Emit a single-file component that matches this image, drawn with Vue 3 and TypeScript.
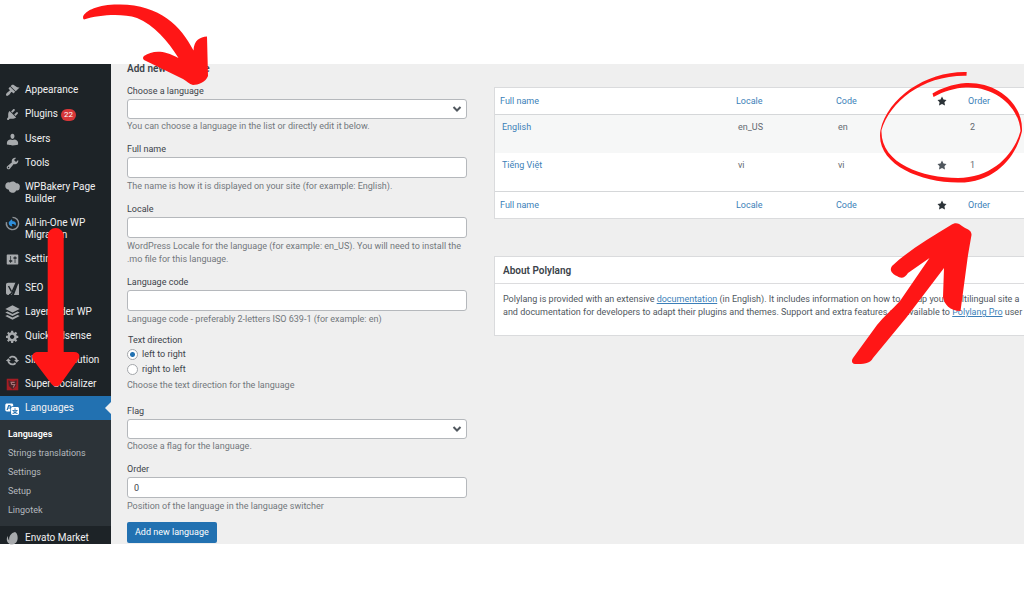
<script setup lang="ts">
import { ref } from 'vue'

interface MenuItem {
  label: string
  icon: string
  badge?: number
  spaced?: boolean
  current?: boolean
}

const paths: Record<string, string> = {
  brush: 'M14.48 11.06L7.41 3.99l1.5-1.5c.5-.56 2.3-.47 3.51.32 1.21.8 1.43 1.28 2.91 2.1 1.18.64 2.45 1.26 4.45.85zm-.71.71L6.7 4.7 4.93 6.47c-.39.39-.39 1.02 0 1.41l1.06 1.06c.39.39.39 1.03 0 1.42-.6.6-1.43 1.11-2.21 1.69-.35.26-.7.53-1.01.84C1.43 14.23.4 16.08 1.4 17.07c.99 1 2.84-.03 4.18-1.36.31-.31.58-.66.85-1.02.57-.78 1.08-1.61 1.69-2.21.39-.39 1.02-.39 1.41 0l1.06 1.06c.39.39 1.02.39 1.41 0z',
  plug: 'M13.11 4.36L9.87 7.6 8 5.73l3.24-3.24c.35-.34 1.05-.2 1.56.32.52.51.66 1.21.31 1.55zm-8 1.77l.91-1.12 9.01 9.01-1.19.84c-.71.71-2.63 1.16-3.82 1.16H6.14L4.9 17.26c-.59.59-1.54.59-2.12 0-.59-.58-.59-1.53 0-2.12l1.24-1.24v-3.88c0-1.13.4-3.19 1.09-3.89zm7.26 3.97l3.24-3.24c.34-.35 1.04-.21 1.55.31.52.51.66 1.21.31 1.55l-3.24 3.25z',
  user: 'M10 9.25c-2.27 0-2.73-3.44-2.73-3.44C7 4.02 7.82 2 9.97 2c2.16 0 2.98 2.02 2.71 3.81 0 0-.41 3.44-2.68 3.44zm0 1.57L12.72 10c2.39 0 5.02 2.33 5.02 4.53v2.49s-3.65 1.13-7.74 1.13c-3.65 0-7.74-1.13-7.74-1.13v-2.49c0-2.25 2.44-4.48 4.97-4.48z',
  wrench: 'M16.68 9.77c-1.34 1.34-3.3 1.67-4.95.99l-5.41 6.52c-.99.99-2.59.99-3.58 0s-.99-2.59 0-3.57l6.52-5.42c-.68-1.65-.35-3.61.99-4.95 1.28-1.28 3.12-1.62 4.72-1.06l-2.89 2.89 2.82 2.82 2.86-2.87c.53 1.58.18 3.39-1.08 4.65zM3.81 16.21c.4.39 1.04.39 1.43 0 .4-.4.4-1.04 0-1.43-.39-.4-1.03-.4-1.43 0-.39.39-.39 1.03 0 1.43z',
  cloud: 'M0 8C0 4 3 2 6 3c3-2 7-2 9 1 4 0 6 3 5 6 0 3-2 5-5 4-1 3-4 4-7 3-2-1-3-2-3-4C2 13 0 11 0 8z',
  sliders: 'M18 16V4c0-.55-.45-1-1-1H3c-.55 0-1 .45-1 1v12c0 .55.45 1 1 1h14c.55 0 1-.45 1-1zM8 11h1c.55 0 1 .45 1 1s-.45 1-1 1H8v1.5c0 .28-.22.5-.5.5s-.5-.22-.5-.5V13H6c-.55 0-1-.45-1-1s.45-1 1-1h1V5.5c0-.28.22-.5.5-.5s.5.22.5.5V11zm5-2h-1c-.55 0-1-.45-1-1s.45-1 1-1h1V5.5c0-.28.22-.5.5-.5s.5.22.5.5V7h1c.55 0 1 .45 1 1s-.45 1-1 1h-1v5.5c0 .28-.22.5-.5.5s-.5-.22-.5-.5V9z',
  layers: 'M10 0l10 5-10 5L0 5zM3 8.5l7 3.5 7-3.5 3 1.5-10 5-10-5zM3 13.500l7 3.500 7-3.500 3 1.500-10 5-10-5z',
  gear: 'M18 12h-2.18c-.17.7-.44 1.35-.81 1.93l1.54 1.54-2.1 2.1-1.54-1.54c-.58.36-1.23.63-1.91.79V19H8v-2.18c-.68-.16-1.33-.43-1.91-.79l-1.54 1.54-2.12-2.12 1.54-1.54c-.36-.58-.63-1.23-.79-1.91H1V9.03h2.17c.16-.7.44-1.35.8-1.94L2.43 5.55l2.1-2.1 1.54 1.54c.58-.37 1.24-.64 1.93-.81V2h3v2.18c.68.16 1.33.43 1.91.79l1.54-1.54 2.12 2.12-1.54 1.54c.36.59.64 1.24.8 1.94H18V12zm-8.5 1.5c1.66 0 3-1.34 3-3s-1.34-3-3-3-3 1.34-3 3 1.34 3 3 3z',
  cycle: 'M10.2 3.28c3.53 0 6.43 2.61 6.92 6h2.08l-3.5 4-3.5-4h2.32c-.45-1.97-2.21-3.45-4.32-3.45-1.45 0-2.73.71-3.54 1.78L4.95 5.66C6.23 4.2 8.11 3.28 10.2 3.28zm-.4 13.44c-3.52 0-6.43-2.61-6.92-6H.8l3.5-4c1.17 1.33 2.33 2.67 3.5 4H5.48c.45 1.97 2.21 3.45 4.32 3.45 1.45 0 2.73-.71 3.54-1.78l1.71 1.95c-1.28 1.46-3.15 2.38-5.25 2.38z',
  translate: 'M11 7H9.49c-.63 0-1.25.3-1.59.7L7 5H4.13l-2.39 7h1.69l.74-2H7v4H2c-1.1 0-2-.9-2-2V5c0-1.1.9-2 2-2h7c1.1 0 2 .9 2 2v2zM6.51 9H4.49l1-2.93zM10 8h7c1.1 0 2 .9 2 2v7c0 1.1-.9 2-2 2h-7c-1.1 0-2-.9-2-2v-7c0-1.1.9-2 2-2zm7.25 5v-1.08h-3.17V9.75h-1.16v2.17H9.75V13h1.28c.11.85.56 1.85 1.28 2.62-.87.36-1.89.62-2.31.62-.01.02.22.97.2 1.46.84 0 2.21-.5 3.28-1.15 1.09.65 2.48 1.15 3.34 1.15-.02-.49.2-1.44.2-1.46-.43 0-1.49-.27-2.38-.63.7-.77 1.14-1.77 1.25-2.61h1.36zm-3.81 1.93c-.5-.46-.85-1.13-1.01-1.93h2.09c-.17.8-.51 1.47-1 1.93l-.04.03s-.03-.02-.04-.03z',
  leaf: 'M14 0c4 2 5 10 3 14-2 5-8 7-12 4C1 15 0 10 3 6c0 3 0 5 2 7C4 7 8 1 14 0z',
}

const menu: MenuItem[] = [
  { label: 'Appearance', icon: 'brush' },
  { label: 'Plugins', icon: 'plug', badge: 22 },
  { label: 'Users', icon: 'user' },
  { label: 'Tools', icon: 'wrench' },
  { label: 'WPBakery Page Builder', icon: 'cloud' },
  { label: 'All-in-One WP Migration', icon: 'migrate' },
  { label: 'Settings', icon: 'sliders' },
  { label: 'SEO', icon: 'seo', spaced: true },
  { label: 'LayerSlider WP', icon: 'layers' },
  { label: 'Quick Adsense', icon: 'gear' },
  { label: 'Slider Revolution', icon: 'cycle' },
  { label: 'Super Socializer', icon: 'shield' },
  { label: 'Languages', icon: 'translate', current: true },
]
const submenu = ['Languages', 'Strings translations', 'Settings', 'Setup', 'Lingotek']

const languages = [
  { name: 'English', locale: 'en_US', code: 'en', isDefault: false, order: 2 },
  { name: 'Tiếng Việt', locale: 'vi', code: 'vi', isDefault: true, order: 1 },
]
const star = 'M10 1l3 6 6 .75-4.12 4.62L16 19l-6-3-6 3 1.13-6.63L1 7.75 7 7z'

const preset = ref('')
const fullName = ref('')
const locale = ref('')
const code = ref('')
const direction = ref('ltr')
const flag = ref('')
const order = ref('0')
</script>

<template>
  <div class="page">
    <div class="admin">
      <nav class="sidebar" aria-label="Main menu">
        <ul class="menu">
          <li v-for="item in menu" :key="item.label" :class="{ spaced: item.spaced }">
            <a href="#" class="item" :class="{ current: item.current }">
              <svg class="icon" viewBox="1 1 18 18" aria-hidden="true">
                <g v-if="item.icon === 'migrate'" fill="none">
                  <path d="M10 1.500a8.500 8.500 0 1 1-8.300 6.500" stroke="#8d9297" stroke-width="2" />
                  <path d="M5 8l4-4 1 3c4 0 6 3 4 6-1-2-3-3-5-2l1 3c-4 0-6-3-5-6z" fill="#2e8fdc" />
                </g>
                <g v-else-if="item.icon === 'seo'">
                  <path d="M4 2h11L9 19H4c-2 0-3-1-3-3V5c0-2 1-3 3-3zM18 3c1 1 1 2 1 3v13h-7z" fill="#a7aaad" />
                  <path d="M4.500 6.500l4 7.500M15.500 1L9 16c-1 2-2 3-4 3" fill="none" stroke="#1d2327" stroke-width="2" />
                </g>
                <g v-else-if="item.icon === 'shield'">
                  <path d="M2 2h16v16H2z" fill="#a51d24" />
                  <path d="M4 4l6 2 6-2-1 8-5 5-5-5z" fill="#4d2428" />
                  <path d="M13 7H8l1 3h4l-2 4" fill="none" stroke="#aa7478" stroke-width="1.500" />
                </g>
                <path v-else :d="paths[item.icon]" fill="currentColor" fill-rule="evenodd" />
              </svg>
              <span class="item-label">{{ item.label }}<span v-if="item.badge" class="badge">{{ item.badge }}</span></span>
            </a>
          </li>
        </ul>
        <ul class="submenu">
          <li v-for="(label, i) in submenu" :key="label">
            <a href="#" :class="{ active: i === 0 }">{{ label }}</a>
          </li>
        </ul>
        <a href="#" class="item last-item">
          <svg class="icon" viewBox="0 0 20 20" aria-hidden="true"><path :d="paths.leaf" fill="currentColor" /></svg>
          <span class="item-label">Envato Market</span>
        </a>
      </nav>

      <main class="content">
        <form class="form" @submit.prevent>
          <h2>Add new language</h2>
          <div class="field">
            <label for="preset">Choose a language</label>
            <div class="select">
              <select id="preset" v-model="preset"><option value=""></option></select>
              <svg viewBox="0 0 10 10" aria-hidden="true"><path d="M1.500 3L5 6.500 8.500 3" /></svg>
            </div>
            <p>You can choose a language in the list or directly edit it below.</p>
          </div>
          <div class="field">
            <label for="name">Full name</label>
            <input id="name" v-model="fullName" type="text">
            <p>The name is how it is displayed on your site (for example: English).</p>
          </div>
          <div class="field">
            <label for="locale">Locale</label>
            <input id="locale" v-model="locale" type="text">
            <p>WordPress Locale for the language (for example: en_US). You will need to install the .mo file for this language.</p>
          </div>
          <div class="field">
            <label for="code">Language code</label>
            <input id="code" v-model="code" type="text">
            <p>Language code - preferably 2-letters ISO 639-1 (for example: en)</p>
          </div>
          <fieldset>
            <legend>Text direction</legend>
            <label class="radio"><input v-model="direction" type="radio" name="direction" value="ltr">left to right</label>
            <label class="radio"><input v-model="direction" type="radio" name="direction" value="rtl">right to left</label>
            <p>Choose the text direction for the language</p>
          </fieldset>
          <div class="field">
            <label for="flag">Flag</label>
            <div class="select">
              <select id="flag" v-model="flag"><option value=""></option></select>
              <svg viewBox="0 0 10 10" aria-hidden="true"><path d="M1.500 3L5 6.500 8.500 3" /></svg>
            </div>
            <p>Choose a flag for the language.</p>
          </div>
          <div class="field">
            <label for="order">Order</label>
            <input id="order" v-model="order" type="text">
            <p>Position of the language in the language switcher</p>
          </div>
          <button type="submit">Add new language</button>
        </form>

        <div class="side">
          <table>
            <colgroup><col><col class="mid"><col class="mid"><col class="narrow"><col class="last"></colgroup>
            <thead>
              <tr>
                <th><a href="#">Full name</a></th>
                <th><a href="#">Locale</a></th>
                <th><a href="#">Code</a></th>
                <th><svg class="star" viewBox="0 0 20 20" role="img" aria-label="Default"><path :d="star" /></svg></th>
                <th><a href="#">Order</a></th>
              </tr>
            </thead>
            <tbody>
              <tr v-for="lang in languages" :key="lang.code">
                <td><a href="#">{{ lang.name }}</a></td>
                <td>{{ lang.locale }}</td>
                <td>{{ lang.code }}</td>
                <td class="mark"><svg v-if="lang.isDefault" class="star" viewBox="0 0 20 20" role="img" aria-label="Default"><path :d="star" /></svg></td>
                <td>{{ lang.order }}</td>
              </tr>
            </tbody>
            <tfoot>
              <tr>
                <th><a href="#">Full name</a></th>
                <th><a href="#">Locale</a></th>
                <th><a href="#">Code</a></th>
                <th><svg class="star" viewBox="0 0 20 20" role="img" aria-label="Default"><path :d="star" /></svg></th>
                <th><a href="#">Order</a></th>
              </tr>
            </tfoot>
          </table>

          <section class="about">
            <h3>About Polylang</h3>
            <p>
              Polylang is provided with an extensive <a href="#">documentation</a> (in English). It includes information on how to set up your multilingual site a<br>
              and documentation for developers to adapt their plugins and themes. Support and extra features are available to <a href="#">Polylang Pro</a> user
            </p>
          </section>
        </div>
      </main>
    </div>

    <svg class="marks" viewBox="0 0 1024 607" aria-hidden="true">
      <path d="M83 17C85 10 100 4 120 4.500C160 5 181 26 193.500 50.500C194 40 200 37 207 36.500L208 76C206 82 198 85 193 85C189 84 187 81 183 79L144 60Q142 58 144 56C152 51 162 49 178.500 58C168 41 154 25 137 18C121 13 99 15 84 19.500Q83 19 83 17z" />
      <path d="M47.700 236a8 8 0 0 1 16 0V352H74C80 352 81 357 77 361L62 382Q56 391 50 382L34 361C30 356 33 352 38 352H47.700z" />
      <path d="M966.700 72C927 71 888 97 880.500 130C875 163 918 182 958 182.500C997 183 1017 154 1022 131C1023 104 998 82 966 83C952 84 940 89 932.500 93.500L933.500 97C944 91 955 88 966 87.500C994 86 1019 106 1020.500 131C1014 155 992 178 958 178C922 178 880 163 881.500 130C890 102 922 75 966.500 75.700z" />
      <path d="M951 225C955 222 959 223 962 226C966 229 972 230 971.500 235L968 255L960.500 311C950 311 944 304 943 297L944 268L906 318L873 358C870 364 863 364 855 364C852 364 851 361 853 358L877 325C884 316 892 310 900 301L929.500 258L908 273C905 278 901 279 897 276C892 274 889 270 892 266C909 250 930 238 951 225z" />
    </svg>
  </div>
</template>

<style>
body { margin: 0; background: #fff; }
</style>

<style scoped>
.page {
  position: relative;
  padding: 64px 0;
  overflow: hidden;
  font: 9px/13px Roboto, "Noto Sans", sans-serif;
  color: #3c434a;
}
ul, h2, h3, p, fieldset { margin: 0; padding: 0; border: 0; list-style: none; }
.admin { display: flex; background: #efefef; }

.sidebar { flex: 0 0 111px; padding-top: 14px; background: #1d2327; }
.spaced { margin-top: 5px; }
.item {
  position: relative;
  display: flex;
  gap: 6px;
  padding: 6px 8px 6px 6px;
  color: #a7aaad;
  font-size: 10px;
  line-height: 12px;
  text-decoration: none;
}
.last-item { padding-bottom: 0; }
.item-label { color: #f0f0f1; }
.icon { flex: none; width: 13px; height: 13px; margin-bottom: -1px; overflow: visible; }
.current { background: #2271b1; color: #fff; }
.current::after {
  content: "";
  position: absolute;
  top: 6px;
  right: 0;
  border: 6px solid transparent;
  border-left: 0;
  border-right-color: #efefef;
}
.badge {
  display: inline-block;
  margin-left: 3px;
  padding: 0 3px;
  border-radius: 6px;
  background: #d63638;
  color: #fff;
  font-size: 8px;
}
.submenu { padding: 5px 0 6px; background: #2c3338; }
.submenu a {
  display: block;
  padding-left: 8px;
  color: #b4b9be;
  line-height: 19px;
  text-decoration: none;
}
.submenu .active { color: #fff; font-weight: 600; }

.content { display: flex; flex: 1; gap: 27px; min-width: 0; padding-left: 16px; }
.form { flex: 0 0 340px; }
h2 { margin-bottom: 12px; font-size: 10px; line-height: 9px; font-weight: 600; }
.field { margin-bottom: 10px; }
.field > label { display: block; margin-bottom: 1px; }
.form p { margin-top: 2px; color: #72777c; }
.form .select + p { margin-top: 1px; }
.select { position: relative; display: flex; }
.select svg {
  position: absolute;
  top: 5px;
  right: 5px;
  width: 10px;
  height: 10px;
  fill: none;
  stroke: #50575e;
  stroke-width: 2;
  pointer-events: none;
}
select, .field > input {
  display: block;
  box-sizing: border-box;
  width: 100%;
  height: 21px;
  margin: 0;
  padding: 0 6px;
  border: 1px solid #b5b8bc;
  border-radius: 3px;
  background: #fff;
  color: #3c434a;
  font: inherit;
  appearance: none;
}
select { height: 20px; }
fieldset { margin: -2px 0 13px; }
legend { padding: 0 1px; }
.radio { display: flex; align-items: center; gap: 4px; line-height: 15px; }
.radio input {
  box-sizing: border-box;
  width: 11px;
  height: 11px;
  margin: 0;
  border: 1px solid #a3a6aa;
  border-radius: 50%;
  background: #fff;
  appearance: none;
}
.radio input:checked { background: radial-gradient(circle, #2271b1 0 2px, #fff 3px); }
button {
  display: block;
  height: 21px;
  margin: -1px 0 1px;
  padding: 0 8px;
  border: 0;
  border-radius: 2px;
  background: #2271b1;
  color: #fff;
  font: inherit;
}

.side { flex: 1; min-width: 0; padding-top: 23px; }
a { color: #3c7fb8; }
table {
  width: 100%;
  table-layout: fixed;
  border-collapse: separate;
  border-spacing: 0;
  border: 1px solid #dadbdd;
  border-right: 0;
  background: #fff;
}
.mid { width: 100px; }
.narrow { width: 32px; }
.last { width: 61px; }
th { height: 26px; padding: 0 0 0 5px; font-weight: 400; text-align: left; }
thead th { border-bottom: 1px solid #d5d7d9; }
tfoot th { border-top: 1px solid #d5d7d9; }
td { box-sizing: border-box; height: 38px; padding: 6px 0 0 7px; vertical-align: top; color: #646970; }
td.mark { padding-left: 6px; }
table a { text-decoration: none; }
tbody tr:first-child { background: #f6f7f7; }
.star { display: block; width: 10px; height: 10px; fill: #2c3338; }
th .star { margin-left: 1px; }
.mark .star { margin-top: 1px; fill: #50575e; }

.about { margin-top: 37px; border: 1px solid #dadbdd; border-right: 0; background: #fff; }
h3 {
  padding: 7px 8px 6px;
  border-bottom: 1px solid #dcdcde;
  font-size: 10px;
  line-height: 13px;
  font-weight: 600;
}
.about p { padding: 9px 0 16px 8px; overflow: hidden; white-space: nowrap; color: #50575e; }

.marks {
  position: absolute;
  top: 0;
  left: 0;
  width: 1024px;
  height: 607px;
  fill: #ff1616;
  pointer-events: none;
}
</style>
